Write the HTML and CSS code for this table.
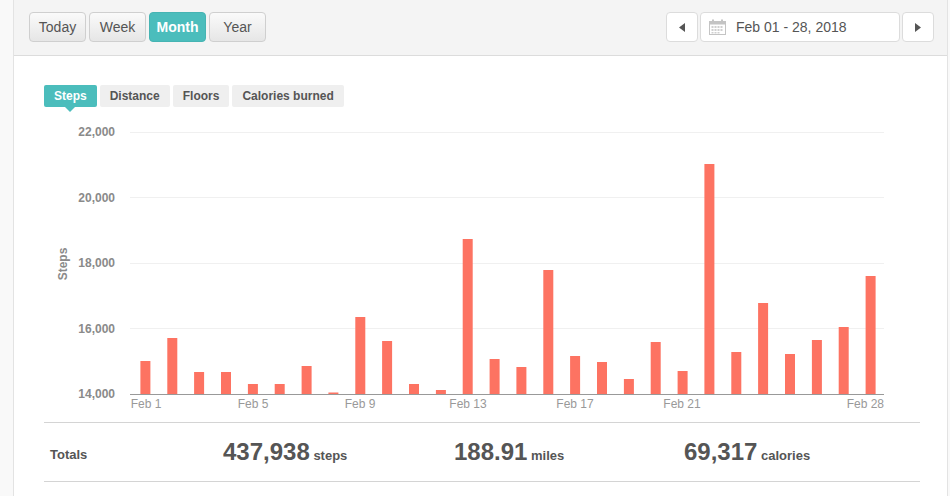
FILE: index.html
```html
<!DOCTYPE html>
<html>
<head>
<meta charset="utf-8">
<link rel="stylesheet" href="styles.css">
</head>
<body>
<div class="card">
  <div class="toolbar">
    <div class="range-group">
      <button class="btn">Today</button>
      <button class="btn">Week</button>
      <button class="btn active">Month</button>
      <button class="btn">Year</button>
    </div>
    <div class="date-group">
      <button class="nav-btn"><svg width="6" height="9" viewBox="0 0 6 9"><path d="M6 0 L0 4.5 L6 9 Z" fill="#555"/></svg></button>
      <div class="date-field">
        <svg class="cal" width="17" height="16" viewBox="0 0 17 16">
          <rect x="0.5" y="2.5" width="16" height="13" fill="#fff" stroke="#c4c4c4"/>
          <rect x="0.5" y="2.5" width="16" height="3" fill="#c4c4c4"/>
          <rect x="3" y="0.5" width="2" height="3" fill="#c4c4c4"/>
          <rect x="12" y="0.5" width="2" height="3" fill="#c4c4c4"/>
          <g fill="#cfcfcf">
            <rect x="2.5" y="7" width="2" height="2"/><rect x="5.5" y="7" width="2" height="2"/><rect x="8.5" y="7" width="2" height="2"/><rect x="11.5" y="7" width="2" height="2"/>
            <rect x="2.5" y="10" width="2" height="2"/><rect x="5.5" y="10" width="2" height="2"/><rect x="8.5" y="10" width="2" height="2"/><rect x="11.5" y="10" width="2" height="2"/>
            <rect x="2.5" y="13" width="2" height="1.5"/><rect x="5.5" y="13" width="2" height="1.5"/><rect x="8.5" y="13" width="2" height="1.5"/>
          </g>
        </svg>
        <span class="date-text">Feb 01 - 28, 2018</span>
      </div>
      <button class="nav-btn"><svg width="6" height="9" viewBox="0 0 6 9"><path d="M0 0 L6 4.5 L0 9 Z" fill="#555"/></svg></button>
    </div>
  </div>

  <div class="content">
    <div class="tabs">
      <span class="tab active">Steps</span>
      <span class="tab">Distance</span>
      <span class="tab">Floors</span>
      <span class="tab">Calories burned</span>
    </div>

    <svg class="chart" width="932" height="305" viewBox="0 0 932 305">
      <g stroke="#f0f0f0" stroke-width="1">
        <line x1="116" y1="21.5" x2="870" y2="21.5"/>
        <line x1="116" y1="86.5" x2="870" y2="86.5"/>
        <line x1="116" y1="152.5" x2="870" y2="152.5"/>
        <line x1="116" y1="217.5" x2="870" y2="217.5"/>
      </g>
      <g class="ylab" text-anchor="end">
        <text x="101" y="25">22,000</text>
        <text x="101" y="91">20,000</text>
        <text x="101" y="156">18,000</text>
        <text x="101" y="222">16,000</text>
        <text x="101" y="287">14,000</text>
      </g>
      <text class="ytitle" transform="translate(53 153) rotate(-90)" text-anchor="middle">Steps</text>
      <g fill="#fd7362">
        <rect x="126.4" y="250" width="10" height="33"/>
        <rect x="153.3" y="227" width="10" height="56"/>
        <rect x="180.1" y="261" width="10" height="22"/>
        <rect x="207.0" y="261" width="10" height="22"/>
        <rect x="233.9" y="273" width="10" height="10"/>
        <rect x="260.7" y="273" width="10" height="10"/>
        <rect x="287.6" y="255" width="10" height="28"/>
        <rect x="314.4" y="281.5" width="10" height="1.5"/>
        <rect x="341.3" y="206" width="10" height="77"/>
        <rect x="368.1" y="230" width="10" height="53"/>
        <rect x="395.0" y="273" width="10" height="10"/>
        <rect x="421.9" y="279" width="10" height="4"/>
        <rect x="448.7" y="128" width="10" height="155"/>
        <rect x="475.6" y="248" width="10" height="35"/>
        <rect x="502.4" y="256" width="10" height="27"/>
        <rect x="529.3" y="159" width="10" height="124"/>
        <rect x="556.1" y="245" width="10" height="38"/>
        <rect x="583.0" y="251" width="10" height="32"/>
        <rect x="609.9" y="268" width="10" height="15"/>
        <rect x="636.7" y="231" width="10" height="52"/>
        <rect x="663.6" y="260" width="10" height="23"/>
        <rect x="690.4" y="53" width="10" height="230"/>
        <rect x="717.3" y="241" width="10" height="42"/>
        <rect x="744.1" y="192" width="10" height="91"/>
        <rect x="771.0" y="243" width="10" height="40"/>
        <rect x="797.9" y="229" width="10" height="54"/>
        <rect x="824.7" y="216" width="10" height="67"/>
        <rect x="851.6" y="165" width="10" height="118"/>
      </g>
      <line x1="116" y1="283.5" x2="870" y2="283.5" stroke="#999" stroke-width="1"/>
      <g class="xlab" text-anchor="middle">
        <text x="132" y="297">Feb 1</text>
        <text x="239" y="297">Feb 5</text>
        <text x="346" y="297">Feb 9</text>
        <text x="454" y="297">Feb 13</text>
        <text x="561" y="297">Feb 17</text>
        <text x="668" y="297">Feb 21</text>
        <text x="870" y="297" text-anchor="end">Feb 28</text>
      </g>
    </svg>

    <div class="totals">
      <span class="totals-label">Totals</span>
      <span class="total"><b>437,938</b> steps</span>
      <span class="total"><b>188.91</b> miles</span>
      <span class="total"><b>69,317</b> calories</span>
    </div>
  </div>
</div>
</body>
</html>
```

FILE: styles.css
```css
html, body {
  margin: 0;
  padding: 0;
}
body {
  background: #f9f9f9;
  font-family: "Liberation Sans", Arial, sans-serif;
  color: #555;
  width: 950px;
  height: 496px;
  overflow: hidden;
}
.card {
  margin-left: 13px;
  width: 933px;
  height: 496px;
  background: #fff;
  border-left: 1px solid #e3e3e3;
  border-right: 1px solid #e3e3e3;
}
.toolbar {
  height: 56px;
  box-sizing: border-box;
  background: #f4f4f4;
  border-bottom: 1px solid #dcdcdc;
  display: flex;
  justify-content: space-between;
  align-items: flex-start;
  padding: 12px 13px 0 15px;
}
.range-group {
  display: flex;
  gap: 3px;
}
.date-group {
  display: flex;
  gap: 2px;
}
.btn {
  font-family: "Liberation Sans", Arial, sans-serif;
  font-size: 14px;
  color: #555;
  height: 30px;
  width: 57px;
  padding: 0;
  border: 1px solid #cfcfcf;
  border-radius: 4px;
  background: linear-gradient(#fafafa, #e6e6e6);
}
.btn.active {
  background: #4bbdbc;
  border-color: #46b4b3;
  color: #fff;
  font-weight: bold;
}
.nav-btn {
  width: 32px;
  height: 30px;
  padding: 0;
  border: 1px solid #dcdcdc;
  border-radius: 4px;
  background: #fff;
  display: flex;
  align-items: center;
  justify-content: center;
}
.date-field {
  width: 200px;
  height: 30px;
  box-sizing: border-box;
  border: 1px solid #dcdcdc;
  border-radius: 4px;
  background: #fff;
  display: flex;
  align-items: center;
  padding-left: 8px;
  gap: 10px;
}
.cal {
  display: block;
}
.date-text {
  font-size: 14px;
  color: #555;
}
.content {
  padding-top: 29px;
}
.tabs {
  display: flex;
  gap: 3px;
  padding-left: 30px;
  height: 22px;
}
.tab {
  position: relative;
  font-size: 12px;
  font-weight: bold;
  color: #555;
  background: #efefef;
  line-height: 22px;
  height: 22px;
  padding: 0 10px;
  border-radius: 2px;
}
.tab.active {
  background: #4bbdbc;
  color: #fff;
}
.tab.active::after {
  content: "";
  position: absolute;
  left: 50%;
  margin-left: -5px;
  top: 22px;
  border-left: 5px solid transparent;
  border-right: 5px solid transparent;
  border-top: 5px solid #4bbdbc;
}
.chart {
  display: block;
  margin-top: 4px;
}
.ylab text {
  font-family: "Liberation Sans", Arial, sans-serif;
  font-size: 12px;
  font-weight: bold;
  fill: #8a8a8a;
}
.ytitle {
  font-family: "Liberation Sans", Arial, sans-serif;
  font-size: 12px;
  font-weight: bold;
  fill: #8a8a8a;
}
.xlab text {
  font-family: "Liberation Sans", Arial, sans-serif;
  font-size: 12px;
  fill: #999;
}
.totals {
  margin: 6px 27px 0 30px;
  height: 60px;
  box-sizing: border-box;
  border-top: 1px solid #d4d4d4;
  border-bottom: 1px solid #d4d4d4;
  display: grid;
  grid-template-columns: 179px 231px 230px 1fr;
  align-items: center;
}
.totals-label {
  font-size: 13px;
  font-weight: bold;
  padding-left: 6px;
  padding-top: 5px;
}
.total {
  font-size: 13px;
  font-weight: bold;
  color: #555;
}
.total b {
  font-size: 24px;
}
```
